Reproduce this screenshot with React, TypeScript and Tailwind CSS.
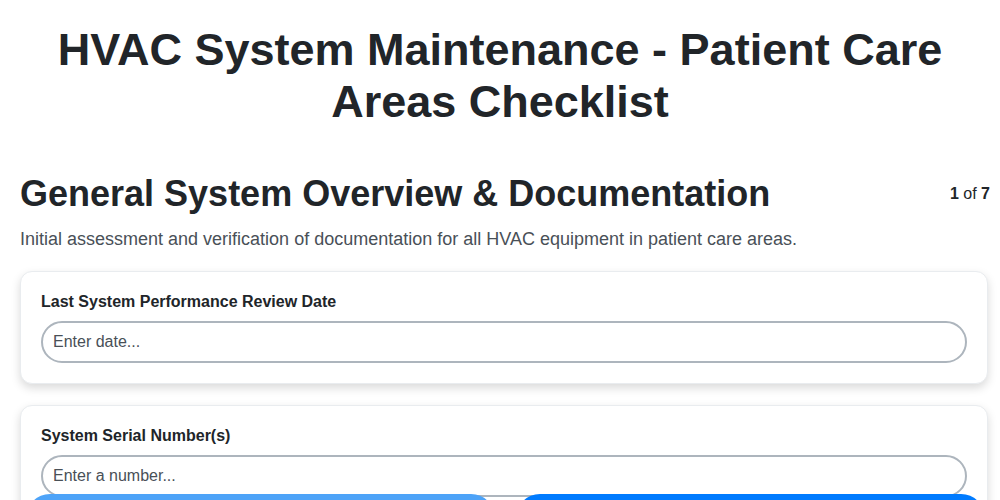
export default function App() {
  const fields = [
    { label: "Last System Performance Review Date", placeholder: "Enter date..." },
    { label: "System Serial Number(s)", placeholder: "Enter a number..." },
  ]

  return (
    <div className="h-screen overflow-hidden bg-white text-[#212529] font-['Liberation_Sans',Arial,sans-serif]">
      <div className="px-5 pt-6">
        <h1 className="text-center text-[45px] font-bold leading-[52px]">
          HVAC System Maintenance - Patient Care Areas Checklist
        </h1>
      </div>

      <div className="pl-5 pr-[10px] pb-24">
        {/* Section header */}
        <div className="mt-[44px] flex items-center justify-between">
          <h2 className="text-[36px] font-bold leading-[43px]">General System Overview &amp; Documentation</h2>
          <div className="text-[16px]">
            <span className="font-bold">1</span> of <span className="font-bold">7</span>
          </div>
        </div>
        <p className="mt-[12px] text-[18px] leading-6 text-[#495057]">
          Initial assessment and verification of documentation for all HVAC equipment in patient care areas.
        </p>

        {/* Fields */}
        <div className="mt-[20px] mr-[2px] flex flex-col gap-[21px]">
          {fields.map((f) => (
            <div
              key={f.label}
              className="rounded-xl border border-[#e9ecef] bg-white px-5 pt-[21px] pb-5 shadow-[0_4px_10px_rgba(0,0,0,0.15)]"
            >
              <label className="block text-[16px] font-bold leading-[18px] mb-[10px]">{f.label}</label>
              <input
                type="text"
                placeholder={f.placeholder}
                className="block h-[42px] w-full rounded-full border-2 border-[#adb5bd] px-[10px] text-[16px] text-[#212529] placeholder:text-[#495057] outline-none"
              />
            </div>
          ))}
        </div>
      </div>

      {/* Navigation buttons */}
      <div className="fixed left-0 right-0 top-[494px] flex gap-[21px] pl-[26px] pr-[15px]">
        <button className="h-[50px] flex-1 rounded-3xl bg-[#4da3f8] text-white text-[16px] font-bold">
          Previous
        </button>
        <button className="h-[50px] flex-1 rounded-3xl bg-[#007bff] text-white text-[16px] font-bold">
          Next
        </button>
      </div>
    </div>
  )
}
